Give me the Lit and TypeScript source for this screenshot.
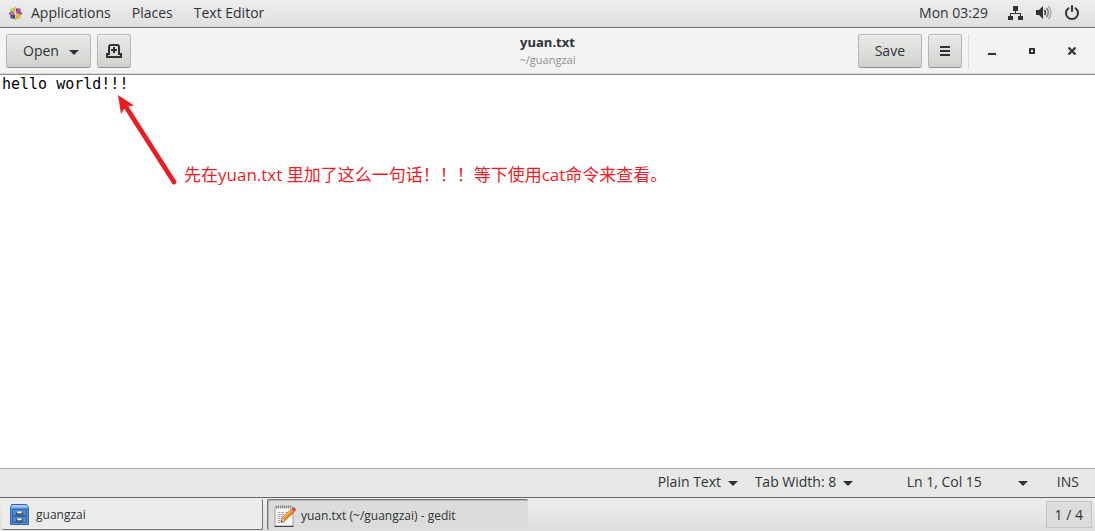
import { LitElement, html, css, svg } from "lit";
import { customElement, state } from "lit/decorators.js";

const caret = html`<svg class="caret" width="10" height="5" viewBox="0 0 10 5" aria-hidden="true"><path d="M0 0h10L5 5z" fill="#2e3436"/></svg>`;

const quarters = [
  { angle: 0, square: "#9ccd2a", petal: "#e8b43a" },
  { angle: 90, square: "#a8358c", petal: "#7d4f9e" },
  { angle: 180, square: "#efa724", petal: "#b3c93c" },
  { angle: 270, square: "#3a3788", petal: "#b0519c" },
];

@customElement("top-bar")
export class TopBar extends LitElement {
  static styles = css`
    :host { display: block; }
    .bar {
      display: flex;
      align-items: center;
      justify-content: space-between;
      box-sizing: border-box;
      height: 28px;
      padding: 0 15px 1px 8px;
      border-bottom: 1px solid #666;
      background: linear-gradient(#ededed, #dfdfdf);
    }
    nav, .tray { display: flex; align-items: center; }
    nav { gap: 21px; }
    .tray { gap: 12px; }
    button {
      display: flex;
      align-items: center;
      gap: 8px;
      margin: 0;
      padding: 0;
      border: 0;
      background: none;
      color: #2e3436;
      font: inherit;
    }
    .clock { margin-right: 8px; }
    svg { display: block; }
  `;

  render() {
    return html`
      <header class="bar">
        <nav>
          <button>
            <svg width="15" height="15" viewBox="0 0 15 15" aria-hidden="true">
              ${quarters.map((q) => svg`
                <g transform="rotate(${q.angle} 7.5 7.5)">
                  <path d="M2.500 2.500h4.500v4.500h-4.500z" fill=${q.square}/>
                  <path d="M7.500 .5l1.700 2v2.500L7.500 7.200 5.800 5v-2.500z" fill=${q.petal}/>
                </g>`)}
              <path d="M3 3l9 9M12 3l-9 9M7.500 3v9M3 7.500h9" stroke="#fff" stroke-width=".5" opacity=".7"/>
            </svg>
            Applications
          </button>
          <button>Places</button>
          <button>Text Editor</button>
        </nav>
        <div class="tray">
          <button class="clock">Mon 03:29</button>
          <button aria-label="Network">
            <svg width="16" height="16" viewBox="0 0 16 16" fill="#2e3436">
              <path d="M5 1h5v5H5zM0 11h5v4H0zM10 11h5v4h-5zM7 6h1v2h5v3h-1V9H3v2H2V8h5z"/>
            </svg>
          </button>
          <button aria-label="Volume">
            <svg width="16" height="16" viewBox="0 0 16 16" fill="none">
              <path d="M0 5h3l4-4v13l-4-4H0z" fill="#2e3436"/>
              <path d="M8.5 5q2 2.5 0 5" stroke="#2e3436" stroke-width="1.5"/>
              <path d="M10.5 3q3.6 4.5 0 9" stroke="#777" stroke-width="1.5"/>
              <path d="M12.5 1q4.6 6.500 0 13" stroke="#aaa" stroke-width="1.5"/>
            </svg>
          </button>
          <button aria-label="Power">
            <svg width="16" height="16" viewBox="0 0 16 16" fill="none" stroke="#2e3436" stroke-width="2" stroke-linecap="round">
              <path d="M4.500 3.200a6 6 0 1 0 7 0M8 1v5"/>
            </svg>
          </button>
        </div>
      </header>
    `;
  }
}

@customElement("editor-header")
export class EditorHeader extends LitElement {
  static styles = css`
    :host { display: block; }
    .bar {
      display: grid;
      grid-template-columns: 1fr auto 1fr;
      align-items: center;
      height: 46px;
      padding: 0 6px;
      border-bottom: 1px solid #8c8c87;
      box-shadow: inset 0 -1px #d9d9d6, inset 0 1px #fff;
      background: #f3f3f3;
    }
    .group { display: flex; align-items: center; gap: 6px; }
    .end { justify-content: flex-end; }
    button {
      display: flex;
      align-items: center;
      justify-content: center;
      box-sizing: border-box;
      height: 34px;
      min-width: 34px;
      margin: 0;
      padding: 0 8px;
      border: 1px solid #b5b5b1;
      border-bottom-color: #91918c;
      border-radius: 3px;
      background: linear-gradient(#eaeae8, #d1d1ce);
      box-shadow: inset 0 1px #f4f4f2;
      color: #2e3436;
      font: inherit;
    }
    .open { gap: 10px; padding: 0 11px 0 16px; }
    .open .caret { margin-top: 3px; }
    .save { padding: 0 16px; }
    .window {
      display: flex;
      gap: 6px;
      padding-left: 6px;
      border-left: 1px solid #d8d8d5;
    }
    .window button { border-color: transparent; background: none; box-shadow: none; }
    .title { display: flex; flex-direction: column; align-items: center; }
    h1 { margin: 0; font-size: 13px; line-height: 18px; font-weight: 700; }
    .path { color: #8b8e8f; font-size: 11px; line-height: 18px; }
    svg { display: block; }
  `;

  render() {
    return html`
      <header class="bar">
        <div class="group">
          <button class="open">Open ${caret}</button>
          <button aria-label="New document">
            <svg width="16" height="16" viewBox="0 0 16 16" fill="none" stroke="#2e3436" stroke-width="2">
              <path d="M3 11V4q0-2 2-2h6q2 0 2 2v7h2v3H1v-3h3"/>
              <path d="M8 4v6M5 7h6"/><path d="M12 11h3"/>
            </svg>
          </button>
        </div>
        <div class="title">
          <h1>yuan.txt</h1>
          <span class="path">~/guangzai</span>
        </div>
        <div class="group end">
          <button class="save">Save</button>
          <button aria-label="Menu">
            <svg width="10" height="10" viewBox="0 0 10 10" fill="#2e3436"><path d="M0 0h10v2H0zM0 4h10v2H0zM0 8h10v2H0z"/></svg>
          </button>
          <div class="window">
            <button aria-label="Minimize">
              <svg width="8" height="8" viewBox="0 0 8 8"><path d="M0 6h8v2H0z" fill="#2e3436"/></svg>
            </button>
            <button aria-label="Maximize">
              <svg width="6" height="6" viewBox="0 0 6 6"><path d="M1 1h4v4H1z" fill="none" stroke="#2e3436" stroke-width="2"/></svg>
            </button>
            <button aria-label="Close">
              <svg width="8" height="8" viewBox="0 0 8 8"><path d="M.5.5l7 7M7.500.5l-7 7" stroke="#2e3436" stroke-width="2.200"/></svg>
            </button>
          </div>
        </div>
      </header>
    `;
  }
}

@customElement("status-bar")
export class StatusBar extends LitElement {
  static styles = css`
    :host { display: block; }
    .bar {
      display: flex;
      align-items: center;
      justify-content: flex-end;
      box-sizing: border-box;
      height: 29px;
      padding: 0 16px 2px 0;
      border-top: 1px solid #b0b0aa;
      background: #e8e8e6;
    }
    label, button { display: flex; align-items: center; gap: 6px; margin: 0; padding: 0; }
    select, button {
      border: 0;
      background: none;
      color: #2e3436;
      font: inherit;
    }
    select { appearance: none; margin: 0; padding: 0; }
    label { margin-right: 17px; }
    .caret { display: block; margin-top: 3px; }
    .position { gap: 36px; margin: 0 29px 0 37px; }
  `;

  render() {
    return html`
      <footer class="bar">
        <label><select aria-label="Highlight mode"><option>Plain Text</option></select>${caret}</label>
        <label><select aria-label="Tab width"><option>Tab Width: 8</option></select>${caret}</label>
        <button class="position">Ln 1, Col 15 ${caret}</button>
        <span>INS</span>
      </footer>
    `;
  }
}

@customElement("window-list")
export class WindowList extends LitElement {
  static styles = css`
    :host { display: block; }
    .bar {
      display: flex;
      align-items: center;
      box-sizing: border-box;
      height: 34px;
      padding: 0 3px 0 2px;
      gap: 4px;
      border-top: 1px solid #666;
      background: linear-gradient(#ededed, #dedede);
    }
    .task {
      display: flex;
      align-items: center;
      flex: 0 1 261px;
      gap: 4px;
      box-sizing: border-box;
      height: 31px;
      margin: 0;
      padding: 1px 6px 0;
      border: 0 solid #777;
      border-width: 0 1px 1px 0;
      border-radius: 2px;
      background: #ececec;
      color: #2e3436;
      font: inherit;
      font-size: 12px;
    }
    .active {
      padding: 1px 5px 0;
      border-width: 1px 0 0 1px;
      background: #dcdcdc;
      box-shadow: inset 1px 1px #b5b5b5;
    }
    .workspace {
      margin: 0 0 0 auto;
      padding: 0 8px;
      height: 27px;
      border: 1px solid #c5c5c5;
      background: #dcdcdc;
      color: #2e3436;
      font: inherit;
    }
    svg { display: block; }
  `;

  render() {
    return html`
      <footer class="bar">
        <button class="task">
          <svg width="24" height="24" viewBox="0 0 24 24" aria-hidden="true">
            <path d="M3.500 1.500h15l2 3v17h-18v-17z" fill="#5b93d8" stroke="#2f66b0"/>
            <path d="M4 2h14.500l1.500 2.500H3z" fill="#a5c8f0"/>
            <path d="M4.500 6.500h14v6h-14zM4.500 13.500h14v6h-14z" fill="#4f8ad6" stroke="#2e62a9"/>
            <path d="M8.500 8.500v2.500h6V8.500M8.500 15.500v2.500h6v-2.500" fill="#f5f5ed" stroke="#4b4d4d" stroke-width="1.400"/>
          </svg>
          guangzai
        </button>
        <button class="task active">
          <svg width="24" height="24" viewBox="0 0 24 24" aria-hidden="true">
            <path d="M2 3h18v19H2z" fill="#f7f7f5" stroke="#999"/>
            <path d="M1.500 22.500h19" stroke="#444"/>
            <path d="M3 3h16" stroke="#888" stroke-width="3" stroke-dasharray="1 1"/>
            <path d="M4.500 8.500h12M4.500 10.500h12M4.500 12.500h9M4.500 14.500h6M4.500 16.500h5M4.500 18.500h8" stroke="#aaa" stroke-dasharray="3 1"/>
            <path d="M8 18l1.500-4.500L18 5l3 3-9 8.500z" fill="#f58a20" stroke="#a85c12" stroke-width=".8"/>
            <path d="M10 14l8.500-8.300" stroke="#ffc270" stroke-width="1.200"/>
            <path d="M8 18l1.500-4.500 2.600 2.800z" fill="#f3dbae" stroke="#8b6a3b" stroke-width=".5"/>
            <path d="M18 5l1.300-1.300q1.700-1 3 .3t.3 3L21 8z" fill="#e0484c" stroke="#b5b5b5" stroke-width=".5"/>
            <path d="M8 18l.5-1.500.9 1z" fill="#222"/>
          </svg>
          yuan.txt (~/guangzai) - gedit
        </button>
        <button class="workspace">1 / 4</button>
      </footer>
    `;
  }
}

@customElement("app-root")
export class AppRoot extends LitElement {
  static styles = css`
    :host {
      display: flex;
      flex-direction: column;
      height: 100vh;
      overflow: hidden;
      color: #2e3436;
      font-family: "Open Sans", "Noto Sans", "Noto Sans CJK SC", sans-serif;
      font-size: 14px;
      line-height: 20px;
    }
    main { position: relative; display: flex; flex: 1; min-height: 0; background: #fff; }
    textarea {
      flex: 1;
      margin: 0;
      padding: 0 2px;
      border: 0;
      outline: 0;
      resize: none;
      background: none;
      color: #000;
      font: 15px/18px "DejaVu Sans Mono", monospace;
    }
    .note { position: absolute; top: 20px; left: 117px; display: flex; align-items: flex-end; gap: 7px; pointer-events: none; }
    .note p {
      margin: 0;
      color: #ed1c24;
      font-size: 17px;
      line-height: 20px;
      white-space: nowrap;
    }
  `;

  @state() private content = "hello world!!!";

  render() {
    return html`
      <top-bar></top-bar>
      <editor-header></editor-header>
      <main>
        <textarea aria-label="Document text" spellcheck="false" .value=${this.content}
          @input=${(e: Event) => (this.content = (e.target as HTMLTextAreaElement).value)}></textarea>
        <div class="note">
          <svg width="60" height="90" viewBox="0 0 60 90" aria-hidden="true">
            <path d="M9 12L57 87" stroke="#ed1c24" stroke-width="4.800" stroke-linecap="round"/>
            <path d="M1 0l16 10.500-6 1-4 2.500-3 5z" fill="#ed1c24"/>
          </svg>
          <p lang="zh-CN">先在yuan.txt 里加了这么一句话！！！等下使用cat命令来查看。</p>
        </div>
      </main>
      <status-bar></status-bar>
      <window-list></window-list>
    `;
  }
}
